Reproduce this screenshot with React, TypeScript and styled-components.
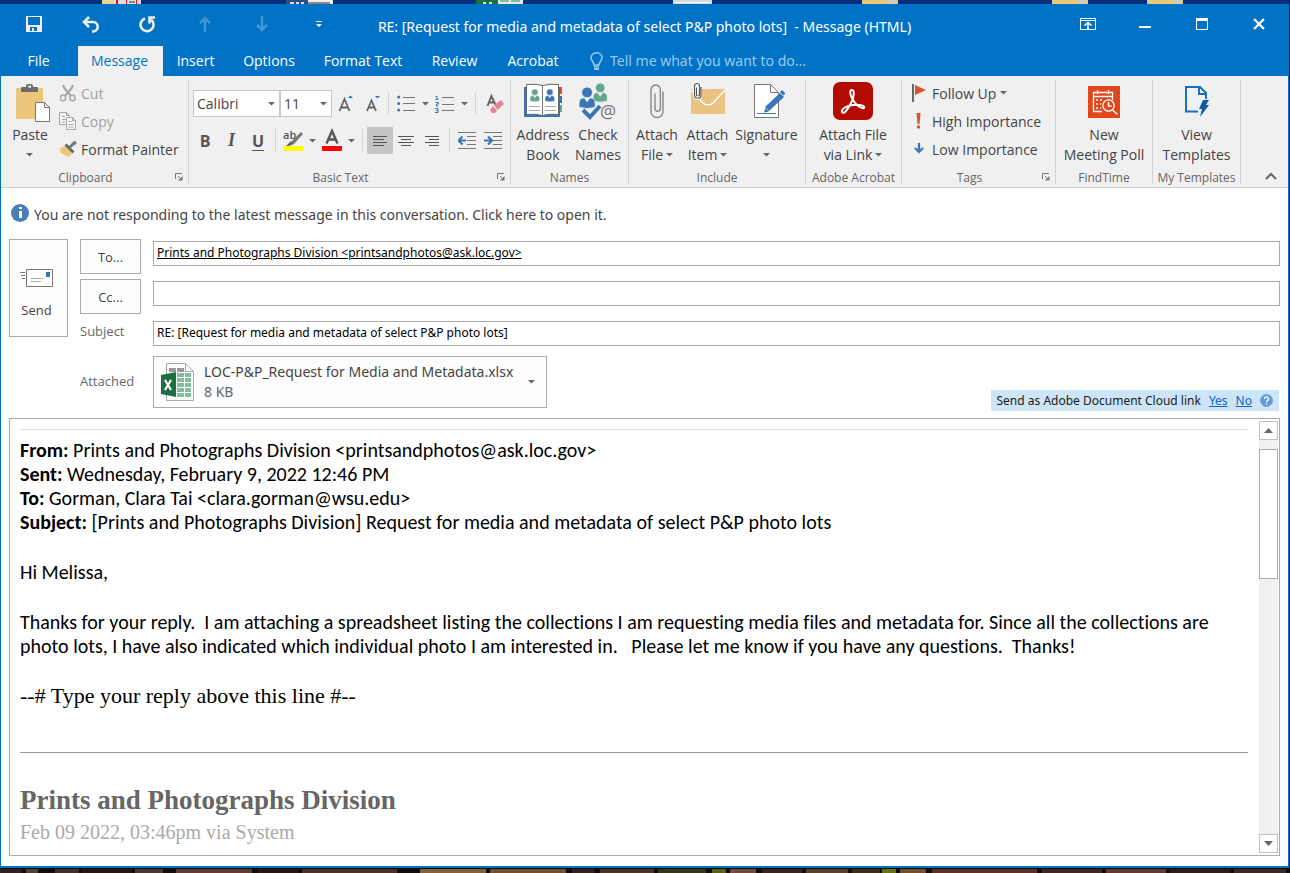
import React from "react";
import styled, { createGlobalStyle, css } from "styled-components";

const ui = `"Open Sans", "Noto Sans", sans-serif`;
const wide = `"Noto Sans", "Open Sans", sans-serif`;
const serif = `"Liberation Serif", serif`;

const Global = createGlobalStyle`
  * { box-sizing: border-box; }
  body { margin: 0; font-family: ${ui}; font-size: 14px; color: #444; }
  button, input, select { font: inherit; color: inherit; margin: 0; padding: 0; }
  svg { display: block; flex: none; }
`;

/* ---------- frame ---------- */
const Desktop = styled.div`
  min-height: 100vh;
  display: flex;
  flex-direction: column;
  background: #06265e;
  padding-right: 1px;
`;
const Strip = styled.div<{ $h: number }>`
  height: ${(p) => p.$h}px;
  margin-right: -1px;
  overflow: hidden;
  svg { width: 100%; height: 100%; }
`;
const Window = styled.main`
  flex: 1;
  display: flex;
  flex-direction: column;
  background: #fff;
  border: solid #0173c7;
  border-width: 0 1px 2px;
`;
const Header = styled.header`
  background: #0173c7;
  color: #fff;
`;
const TitleBar = styled.div`
  display: grid;
  grid-template-columns: 1fr auto 1fr;
  height: 42px;
`;
const Quick = styled.div`
  display: flex;
  height: 40px;
  padding-left: 4px;
`;
const Captions = styled(Quick)`
  justify-content: flex-end;
  padding: 0 1px 0 0;
`;
const Title = styled.h1`
  margin: 0;
  padding-top: 3px;
  font-family: ${wide};
  font-size: 14px;
  font-weight: 400;
  line-height: 40px;
  white-space: pre;
`;
const plain = css`
  display: flex;
  align-items: center;
  justify-content: center;
  background: none;
  border: 0;
`;
const BarButton = styled.button`
  ${plain}
  width: 57px;
  height: 40px;
`;
const Tabs = styled.nav`
  display: flex;
  height: 30px;
`;
const Tab = styled.button<{ $w: number; $on?: boolean }>`
  ${plain}
  width: ${(p) => p.$w}px;
  padding: 0 2px 2px 0;
  white-space: nowrap;
  background: ${(p) => (p.$on ? "#f0f0f0" : "none")};
  color: ${(p) => (p.$on ? "#0173c7" : "#fff")};
`;
const Tell = styled.label`
  display: flex;
  align-items: center;
  gap: 7px;
  padding-left: 15px;
  input {
    width: 240px;
    padding-bottom: 2px;
    border: 0;
    background: none;
    font-family: ${wide};
  }
  input::placeholder { color: #99c9ee; opacity: 1; }
`;

/* ---------- ribbon ---------- */
const Ribbon = styled.section`
  display: flex;
  height: 112px;
  padding: 4px 0 3px;
  background: #f0f0f0;
  border-bottom: 1px solid #d2d2d2;
`;
const GroupBox = styled.section<{ $w: number }>`
  flex: none;
  width: ${(p) => p.$w}px;
  display: flex;
  flex-direction: column;
  border-right: 1px solid #d2d2d2;
`;
const GroupBody = styled.div<{ $pad: number }>`
  flex: 1;
  display: flex;
  padding-left: ${(p) => p.$pad}px;
`;
const GroupFoot = styled.div`
  display: flex;
  height: 14px;
  line-height: 16px;
  font-size: 12px;
  color: #666;
  white-space: nowrap;
  span { flex: 1; text-align: center; }
`;
const Launch = styled.button`
  ${plain}
  width: 18px;
`;
const Big = styled.button<{ $w: number }>`
  flex: none;
  display: flex;
  flex-direction: column;
  align-items: center;
  gap: 3px;
  width: ${(p) => p.$w}px;
  padding-top: 2px;
  border: 0;
  background: none;
  line-height: 20px;
  white-space: nowrap;
`;
const Line = styled.span`
  display: flex;
  align-items: center;
  justify-content: center;
  gap: 3px;
  min-height: 20px;
`;
const Column = styled.div<{ $l?: number }>`
  display: flex;
  flex-direction: column;
  padding-left: ${(p) => p.$l ?? 0}px;
`;
const Small = styled.button<{ $off?: boolean }>`
  display: flex;
  align-items: center;
  gap: 4px;
  height: 28px;
  padding-bottom: 2px;
  border: 0;
  background: none;
  white-space: nowrap;
  color: ${(p) => (p.$off ? "#a0a0a0" : "#444")};
`;
const TextTools = styled.div`
  display: flex;
  flex-direction: column;
  gap: 10px;
  padding-top: 10px;
`;
const ToolRow = styled.div`
  display: flex;
  height: 27px;
`;
const Tool = styled.button<{ $w: number; $on?: boolean }>`
  ${plain}
  width: ${(p) => p.$w}px;
  background: ${(p) => (p.$on ? "#c5c5c5" : "none")};
`;
const Bar = styled.i<{ $l: number; $r: number }>`
  width: 1px;
  height: 22px;
  margin: 2px ${(p) => p.$r}px 2px ${(p) => p.$l}px;
  background: #d2d2d2;
`;
const Combo = styled.label<{ $w: number }>`
  display: grid;
  align-items: center;
  width: ${(p) => p.$w}px;
  select {
    grid-area: 1 / 1;
    height: 27px;
    padding-left: 3px;
    appearance: none;
    background: #fff;
    border: 1px solid #c6c6c6;
    border-radius: 0;
  }
  svg { grid-area: 1 / 1; justify-self: end; margin-right: 5px; pointer-events: none; }
`;
const Collapse = styled.button`
  ${plain}
  width: 30px;
  height: 16px;
  margin-left: auto;
  margin-right: 2px;
  align-self: flex-end;
`;

/* ---------- message header ---------- */
const Info = styled.button`
  display: flex;
  align-items: center;
  gap: 5px;
  height: 51px;
  padding: 2px 0 0 10px;
  border: 0;
  background: none;
  font-family: ${wide};
  text-align: left;
  svg { margin-bottom: 4px; }
`;
const Form = styled.form`
  display: grid;
  grid-template-columns: 59px 61px minmax(0, 1fr);
  grid-template-rows: 35px 35px 28px 61px;
  gap: 5px 12px;
  padding: 0 8px;
  font-size: 13px;
`;
const Boxed = styled.button`
  ${plain}
  border: 1px solid #ababab;
  background: #fdfdfd;
`;
const Send = styled(Boxed)`
  grid-row: 1 / 4;
  height: 98px;
  flex-direction: column;
  gap: 14px;
  padding: 12px 4px 0 0;
`;
const Field = styled.input<{ $line?: boolean }>`
  width: 100%;
  height: 25px;
  margin-top: 2px;
  padding: 0 3px 2px;
  border: 1px solid #ababab;
  background: #fff;
  color: #000;
  font-family: ${wide};
  font-size: 12px;
  text-decoration: ${(p) => (p.$line ? "underline" : "none")};
`;
const Label = styled.label`
  line-height: 24px;
  color: #666;
`;
const FieldLabel = styled.span`
  padding-top: 17px;
  line-height: 24px;
  color: #666;
`;
const AttachRow = styled.div`
  display: flex;
  justify-content: space-between;
  align-items: flex-end;
  padding: 0 1px 2px 0;
`;
const Attachment = styled(Boxed)`
  width: 394px;
  height: 52px;
  margin-bottom: 3px;
  padding: 0 11px 0 7px;
  gap: 9px;
  justify-content: flex-start;
  text-align: left;
  font-family: ${wide};
  font-size: 14px;
  line-height: 20px;
  white-space: nowrap;
  span { flex: 1; }
  small { display: block; font-size: 14px; color: #666; }
`;
const Cloud = styled.div`
  display: flex;
  align-items: center;
  gap: 8px;
  height: 21px;
  padding: 0 6px;
  background: #cde6f7;
  color: #1a1a1a;
  font-family: ${wide};
  font-size: 12px;
  white-space: nowrap;
  a { color: #0a62c4; }
`;

/* ---------- message body ---------- */
const Editor = styled.section`
  flex: 1;
  display: flex;
  margin: 5px 8px 10px;
  border: 1px solid #ababab;
`;
const Mail = styled.article`
  flex: 1;
  padding: 10px 10px 0 10px;
  color: #000;
  font-family: Carlito, Lato, sans-serif;
  font-size: 20px;
  line-height: 24px;
  font-variant-ligatures: none;
  p { margin: 0 0 26px; }
`;
const Rule = styled.hr<{ $dark?: boolean }>`
  height: 1px;
  margin: 0 0 8px;
  border: 0;
  background: ${(p) => (p.$dark ? "#999" : "#e1e1e1")};
`;
const Reply = styled.p`
  font-family: ${serif};
  font-size: 22px;
  padding-bottom: 18px;
`;
const Sender = styled.h2`
  margin: 32px 0 0;
  font-family: ${serif};
  font-size: 27px;
  line-height: 30px;
  color: #666;
`;
const When = styled.div`
  padding-top: 5px;
  font-family: ${serif};
  font-size: 20px;
  color: #aaa;
`;
const Scroll = styled.div`
  display: flex;
  flex-direction: column;
  width: 19px;
  margin: 2px 1px;
  background: #f0f0f0;
`;
const Arrow = styled.button`
  ${plain}
  height: 19px;
  border: 1px solid #c0c0c0;
  background: #fff;
`;
const Thumb = styled.div`
  height: 130px;
  margin: 9px 0 auto;
  border: 1px solid #ababab;
  background: #fff;
`;

/* ---------- drawings ---------- */
const Down = () => (
  <svg width="7" height="4" viewBox="0 0 7 4"><path d="M0 0h7L3.500 3.500z" fill="#666" /></svg>
);
const Folder = ({ x }: { x: number }) => (
  <g>
    <path d={`M${x} 0h36v4h-36z`} fill="#e3cb80" />
    <path d={`M${x + 26} 0h8v3h-8z`} fill="#c8cdd3" />
  </g>
);
const DesktopTop = () => (
  <svg viewBox="0 0 1290 4" preserveAspectRatio="none">
    <path d="M0 0h1290v4H0z" fill="#042f7f" />
    <path d="M102 0h12v4h-12z" fill="#e8d591" /><path d="M114 0h27v4h-27z" fill="#dedede" />
    <path d="M116 0h2v4h-2zM126 0h1v4h-1zM136 0h1v4h-1z" fill="#d12" />
    <path d="M129 1h6v2h-6z" fill="#888" />
    <path d="M286 0h22v4h-22z" fill="#2d4c83" /><path d="M290 2h4v2h-4zM296 2h3v2h-3zM301 2h3v2h-3z" fill="#ddd" />
    <path d="M308 0h25v4h-25z" fill="#eee" /><path d="M308 2h22v2h-22z" fill="#888" />
    <path d="M476 0h22v4h-22z" fill="#1d7044" /><path d="M483 2h3v2h-3zM489 2h3v2h-3z" fill="#ddd" />
    <path d="M498 0h25v4h-25z" fill="#e8e8e8" /><path d="M500 0h9v2h-9zM511 0h9v2h-9z" fill="#86bf9f" />
    <path d="M673 0h39v4h-39z" fill="#d5d8dd" /><path d="M675 2h34v1h-34z" fill="#fff" />
    <Folder x={862} /><Folder x={1052} /><Folder x={1147} />
  </svg>
);
const planks: [number, number, string][] = [
  [0, 22, "#2c211e"], [26, 12, "#50403a"], [55, 24, "#3d302c"], [82, 50, "#241815"], [135, 28, "#4a3835"],
  [176, 76, "#5d3b33"], [258, 40, "#241713"], [302, 95, "#4a3026"], [420, 66, "#80623a"], [490, 76, "#6e5032"],
  [572, 22, "#33221b"], [600, 54, "#4a3426"], [658, 48, "#2f3818"], [712, 14, "#596214"], [730, 26, "#704a3c"],
  [762, 40, "#35251d"], [806, 42, "#58402e"], [852, 28, "#3a2d1b"], [882, 14, "#69730e"], [900, 26, "#714f2b"],
  [932, 105, "#5b322a"], [1042, 60, "#402620"], [1106, 60, "#5d3931"], [1170, 60, "#2b1b19"], [1234, 52, "#3d2826"],
];
const DesktopBottom = () => (
  <svg viewBox="0 0 1290 5" preserveAspectRatio="none">
    <path d="M0 0h1290v5H0z" fill="#120c0c" />
    {planks.map(([x, w, c]) => <rect key={x} x={x} y="1" width={w} height="4" fill={c} />)}
  </svg>
);
const Save = () => (
  <svg width="16" height="16" viewBox="0 0 16 16"><path fill="#f0f0f0" fillRule="evenodd" d="M0 0h16v16H0zM2 1v8h12V1zM4 11v4h7v-4z" /><path fill="#f0f0f0" d="M6 12h2v3H6z" /></svg>
);
const Undo = () => (
  <svg width="18" height="17" viewBox="0 0 18 17" fill="none" stroke="#f0f0f0"><path d="M2 6h9a4.700 4.700 0 0 1 0 9.500h-1" strokeWidth="2.600" /><path d="M7 1 2 6l5 5" strokeWidth="2.600" /></svg>
);
const Redo = () => (
  <svg width="17" height="17" viewBox="0 0 17 17" fill="none" stroke="#f0f0f0" strokeWidth="2.600"><path d="M6 2.500a6.500 6.500 0 1 0 6 1" /><path d="M16 1.500h-5.500v6" /></svg>
);
const Vertical = ({ flip }: { flip?: boolean }) => (
  <svg width="12" height="16" viewBox="0 0 12 16" fill="none" stroke="#3f95d6" strokeWidth="2.600"><path d={flip ? "M6 0v14M1 9l5 5 5-5" : "M6 16V2M1 7l5-5 5 5"} /></svg>
);
const Customize = () => (
  <svg width="6" height="6" viewBox="0 0 6 6" fill="#f0f0f0"><path d="M0 0h6v1H0zM0 3h6L3 6z" /></svg>
);
const RibbonMode = () => (
  <svg width="16" height="12" viewBox="0 0 16 12" fill="none" stroke="#fff"><path d="M.5.5h15v11H.5zM1 2.500h14" /><path d="M8 11V5M4.500 7.500 8 4.500l3.500 3" strokeWidth="1.600" /></svg>
);
const Minimize = () => <svg width="12" height="12" viewBox="0 0 12 12"><path d="M0 8h12v2H0z" fill="#fff" /></svg>;
const Maximize = () => <svg width="12" height="12" viewBox="0 0 12 12"><path fillRule="evenodd" d="M0 0h12v12H0zM1 3v8h10V3z" fill="#fff" /></svg>;
const Close = () => <svg width="12" height="12" viewBox="0 0 12 12"><path d="m1 1 10 10M11 1 1 11" stroke="#fff" strokeWidth="2.200" /></svg>;
const Bulb = () => (
  <svg width="13" height="19" viewBox="0 0 13 19" fill="none" stroke="#99c9ee" strokeWidth="1.500"><path d="M4 13c0-3-3-4-3-7.200a5.500 5 0 0 1 11 0C12 9 9 10 9 13zM4 14.700h5" /><path d="M4 17h5" strokeWidth="2" /></svg>
);
const Paste = () => (
  <svg width="42" height="40" viewBox="-6 0 42 40">
    <path d="M1 6h27v31H1z" fill="#edc67e" />
    <path fillRule="evenodd" d="M6 10V6q0-1 1-1h4V4q0-2 2-2h3q2 0 2 2v1h4q1 0 1 1v4zM13.500 3.500v2.200h2.500V3.500z" fill="#6c6c6c" />
    <path d="M20.500 20.500h9l5 5v14h-14z" fill="#fff" stroke="#777" /><path d="M29.500 20.500v5h5" fill="none" stroke="#777" />
  </svg>
);
const Cut = () => (
  <svg width="18" height="18" viewBox="0 0 18 18" fill="none" stroke="#a7a7a7"><path d="M4 1c1 4 5 7 8 11M14 1C13 5 9 8 6 12" strokeWidth="2.200" /><circle cx="4" cy="14" r="2.700" strokeWidth="1.400" /><circle cx="13.500" cy="14" r="2.700" strokeWidth="1.400" /></svg>
);
const Copy = () => (
  <svg width="18" height="18" viewBox="0 0 18 18" fill="#f5f5f5" stroke="#a7a7a7"><path d="M.5.5h7l3 3v9H.5zM7.500.5v3h3M3 4.500h3M3 7.500h5M3 10h3" /><path d="M7.500 5.500h6l3 3v9h-9zM13.500 5.500v3h3M9.500 9.500h3M9.500 12.500h5M9.500 15h5" /></svg>
);
const Painter = () => (
  <svg width="18" height="18" viewBox="0 0 18 18"><path d="m1 8 5-2 7 7-3 4q-5-1-9-5z" fill="#edc67e" /><path d="m5.500 5.500 2-2 8 8-2 2z" fill="#666" /><path d="m10.500 7.500 4-4" stroke="#777" strokeWidth="3" /><circle cx="15.500" cy="3" r="2" fill="#777" /></svg>
);
const Launcher = () => (
  <svg width="8" height="8" viewBox="0 0 8 8"><path d="M.5 6V.5H7M3 3l3 3" fill="none" stroke="#777" /><path d="M7.500 3v4.500H3z" fill="#777" /></svg>
);
const SizeA = ({ down }: { down?: boolean }) => (
  <svg width="16" height="18" viewBox="0 0 16 18"><path d={down ? "M2 16 6.500 5.500 11 16M3.500 12.500h6" : "M1.500 16 6.500 4 11.500 16M3 12.500h7"} fill="none" stroke="#666" strokeWidth="1.800" /><path d={down ? "M10 1h5l-2.500 2.500z" : "M10 3h5l-2.500-2.500z"} fill="#3572b0" /></svg>
);
const Bullets = () => (
  <svg width="18" height="17" viewBox="0 0 18 17"><path d="M6 2.500h12M6 8.500h12M6 15.500h12" stroke="#777" /><g fill="#3a76b5"><circle cx="1.700" cy="2" r="1.500" /><circle cx="1.700" cy="8.500" r="1.500" /><circle cx="1.700" cy="15" r="1.500" /></g></svg>
);
const Numbers = () => (
  <svg width="19" height="18" viewBox="0 0 19 18"><path d="M7 2.500h12M7 9.500h12M7 15.500h12" stroke="#777" /><path d="M.5 1.500h1.500v3M.5 4.500h3M.5 7.500h3v1.500h-2v2h2M0 13.500h3v4H0M1 15.500h2" fill="none" stroke="#3a76b5" /></svg>
);
const Eraser = () => (
  <svg width="18" height="20" viewBox="0 0 18 20"><path d="M1.500 12 5.500 2l4 9M3 8.500h5" fill="none" stroke="#666" strokeWidth="2" /><path d="m8 11 7-5 3 4-6.500 6z" fill="#e8819a" /><path d="m7 12 4 4.500-2 2.500H6l-2-3z" fill="#e8819a" /></svg>
);
const Mark = styled.span<{ $k: "b" | "i" | "u" }>`
  font-size: 16px;
  font-weight: 700;
  color: #555;
  ${(p) => p.$k === "i" && `font-family: ${serif}; font-style: italic; font-size: 18px;`}
  ${(p) => p.$k === "u" && "text-decoration: underline; text-decoration-thickness: 1px; text-underline-offset: 3px;"}
`;
const Highlight = () => (
  <svg width="20" height="28" viewBox="0 -3 20 28"><path d="M0 16h20v5H0z" fill="#ff0" /><text x="0" y="9" fontSize="11" fontWeight="600" fill="#555">ab</text><path d="m18 2 2 2-9 10-3-2z" fill="#777" /><path d="m8 11 3 3-5 2H3z" fill="#666" /></svg>
);
const FontColor = () => (
  <svg width="20" height="28" viewBox="0 -3 20 28"><path d="M0 16h20v5H0z" fill="#f00" /><path d="M4.500 13.500 10 1l5.500 12.500M6.500 9.500h7" fill="none" stroke="#555" strokeWidth="2.400" /></svg>
);
const Align = ({ k }: { k: "l" | "c" | "r" }) => (
  <svg width="16" height="12" viewBox="-1 0 16 12"><path d={{ l: "M0 1.500h14M0 4.500h11M0 7.500h14M0 10.500h11", c: "M-1 1.500h16M2 4.500h10M-1 7.500h16M2 10.500h10", r: "M0 1.500h14M4 4.500h10M0 7.500h14M4 10.500h10" }[k]} stroke="#555" /></svg>
);
const Dent = ({ right }: { right?: boolean }) => (
  <svg width="18" height="17" viewBox="0 0 18 17"><path d="M0 .5h18M9 4.500h9M9 8.500h9M9 12.500h9M0 16.500h18" stroke="#777" /><path d={right ? "M0 8.500h7M4 4.500l4 4-4 4" : "M8 8.500H1M4.500 4.500l-4 4 4 4"} fill="none" stroke="#3a76b5" strokeWidth="2.200" /></svg>
);
const Person = ({ x, y, c, s = 1 }: { x: number; y: number; c: string; s?: number }) => (
  <g transform={`translate(${x} ${y}) scale(${s})`} fill={c} stroke="#f3f3f3" strokeWidth=".6"><circle cx="6" cy="4" r="4" /><path d="M0 15v-3q0-4 4-4l2 3 2-3q4 0 4 4v3q-6 2-12 0z" /></g>
);
const AddressBook = () => (
  <svg width="40" height="40" viewBox="0 0 40 40">
    <path d="M34 5h5v7h-5z" fill="#d8532f" /><path d="M34 14h5v7h-5z" fill="#3a76b5" /><path d="M34 23h5v7h-5z" fill="#64a68b" />
    <path d="M1 5h36v30H1z" fill="#3a76b5" />
    <path d="M3.500 2.500q9-1 16 1 7-2 16-1v30q-9-1-16 1-7-2-16-1z" fill="#fff" stroke="#666" /><path d="M19.500 3v30" stroke="#777" />
    <Person x={7} y={7} c="#64a68b" s={0.8} /><Person x={22} y={7} c="#3a76b5" s={0.8} />
    <path d="M6 24.500h11M6 28.500h11M22 24.500h11M22 28.500h11" stroke="#aaa" />
  </svg>
);
const CheckNames = () => (
  <svg width="40" height="40" viewBox="0 0 40 40">
    <Person x={15} y={1} c="#64a68b" s={1.2} /><Person x={1} y={5} c="#3a76b5" s={1.35} />
    <path d="m5 28 7 7 10-11" fill="none" stroke="#3a76b5" strokeWidth="4" />
    <text x="22" y="36" fontSize="18" fill="#777">@</text>
  </svg>
);
const Clip = () => (
  <svg width="18" height="40" viewBox="0 0 18 40"><path d="M6.500 12v15a2.700 2.700 0 0 0 5.400 0V9A4.700 5 0 0 0 2.500 8v22a6 6 0 0 0 12 0V10" transform="translate(.5 -.5)" fill="none" stroke="#888" strokeWidth="1.400" /></svg>
);
const AttachItem = () => (
  <svg width="36" height="40" viewBox="0 0 36 40"><path d="M1 7h34v25H1z" fill="#eac382" /><path d="M1 8l11 12q6 6 12 0L35 8" fill="none" stroke="#fff" strokeWidth="1.500" /><rect x="3" y="0" width="9" height="18" rx="4.500" fill="#fff" /><path d="M6.500 5.500v7a1.500 1.500 0 0 0 3 0V4a2.500 2.500 0 0 0-5 0v9a3.200 3.200 0 0 0 6.500 0V5" fill="none" stroke="#555" strokeWidth="1.200" /></svg>
);
const Signature = () => (
  <svg width="36" height="40" viewBox="0 0 36 40"><path d="M5.500 2.500h16l8 8v25h-24z" fill="#fff" stroke="#777" /><path d="M21.500 2.500v8h8" fill="none" stroke="#777" /><path d="M8 31.500h19" stroke="#3a76b5" /><path d="m31 11 4 4-15 14-4-4z" fill="#3a76b5" /><path d="m16.500 26 3.500 3.500-5 1z" fill="#3a76b5" /><path d="m32 9 3.500 3.500" stroke="#3a76b5" strokeWidth="3" /></svg>
);
const Acrobat = () => (
  <svg width="40" height="40" viewBox="0 0 40 40"><rect width="40" height="38" rx="7" fill="#b30b00" /><path d="M19 8c-3 0-2 5 1 10 3 5 8 9 11 8 2-2-4-4-11-3-7 1-12 4-11 7 2 3 6-3 9-9 3-5 4-13 1-13z" fill="none" stroke="#fff" strokeWidth="2" /></svg>
);
const Poll = () => (
  <svg width="32" height="40" viewBox="0 0 32 40"><path d="M0 4h32v32H0z" fill="#e2461b" /><path d="M14 29.500H5.500v-19h19V18M5.500 14.500h19M9.500 8v4M20.500 8v4" fill="none" stroke="#fff" strokeWidth="1.300" /><path d="M8 18h2M8 22h2M8 26h2M12 18h2M12 22h1M12 26h1" stroke="#fff" strokeWidth="1.500" /><circle cx="20.500" cy="23.500" r="5.700" fill="none" stroke="#fff" strokeWidth="1.300" /><path d="M20.500 20v4h3M24.500 28l5 4.500" fill="none" stroke="#fff" strokeWidth="1.500" /></svg>
);
const Template = () => (
  <svg width="26" height="40" viewBox="0 0 26 40"><path d="M14 29.500H2V5h14l6 6v6" fill="none" stroke="#1b6fc0" strokeWidth="2" /><path d="M15 5v7h7" fill="none" stroke="#1b6fc0" strokeWidth="2" /><path d="m19 18 6 0-3 5h3l-9 12 2-8h-3z" fill="#0b5ea5" /></svg>
);
const Flag = () => (
  <svg width="16" height="18" viewBox="0 0 16 18"><path d="M0 0h2v18H0z" fill="#666" /><path d="m3 1 11 5-11 5z" fill="#d8532f" /></svg>
);
const High = () => (
  <svg width="16" height="18" viewBox="0 0 16 18"><path d="M4.500 1h4L7.500 12h-2z" fill="#d8532f" /><circle cx="6.500" cy="15" r="1.700" fill="#d8532f" /></svg>
);
const Low = () => (
  <svg width="16" height="18" viewBox="0 0 16 18"><path d="M7 3v9M3 8l4 4 4-4" fill="none" stroke="#3a76b5" strokeWidth="2.200" /></svg>
);
const InfoMark = () => (
  <svg width="18" height="18" viewBox="0 0 18 18"><circle cx="9" cy="9" r="9" fill="#4a7db5" /><path d="M8 3h3v2H8zM8 7h3v7H8z" fill="#fff" /></svg>
);
const Envelope = () => (
  <svg width="33" height="18" viewBox="0 0 33 18"><path d="M6.500.5h26v17h-26z" fill="#fff" stroke="#777" /><path d="M26 3h4v5h-4z" fill="#3a76b5" /><path d="M11 9.500h12M11 12.500h10" stroke="#aaa" /><path d="M0 3.500h5M1 6.500h4M2 9.500h3" stroke="#777" /></svg>
);
const Excel = () => (
  <svg width="34" height="40" viewBox="0 0 34 40">
    <path d="M5.500 1.500h19l8 8v29h-27z" fill="#fff" stroke="#aaa" /><path d="M24.500 1.500v8h8" fill="none" stroke="#aaa" />
    <path d="M8 6h7v4H8zM16 6h7v4h-7z" fill="#999" />
    <path d="M16 11h7v4h-7zM24 11h6v4h-6zM16 16h7v4h-7zM24 16h6v4h-6zM16 21h7v4h-7zM24 21h6v4h-6zM16 26h7v4h-7zM24 26h6v4h-6zM16 31h7v4h-7zM24 31h6v4h-6z" fill="#82bd9c" />
    <path d="m0 13 15-3v25L0 32z" fill="#1d7044" /><path d="m4 18 6 10M10 18 4 28" stroke="#fff" strokeWidth="2.200" />
  </svg>
);
const Help = () => (
  <svg width="13" height="13" viewBox="0 0 13 13"><circle cx="6.500" cy="6.500" r="6" fill="#5c9bdc" stroke="#7c9fc8" /><path d="M4.500 5a2 2 0 1 1 3 1.600q-1 .6-1 1.600M6.500 9.300v1.200" fill="none" stroke="#fff" strokeWidth="1.400" /></svg>
);
const Tri = ({ up }: { up?: boolean }) => (
  <svg width="9" height="5" viewBox="0 0 9 5"><path d={up ? "M0 5h9L4.500 0z" : "M0 0h9L4.500 5z"} fill="#666" /></svg>
);
const Chevron = () => (
  <svg width="12" height="8" viewBox="0 0 12 8"><path d="m1 7 5-5 5 5" fill="none" stroke="#666" strokeWidth="2" /></svg>
);

/* ---------- composed parts ---------- */
type GroupProps = { name: string; w: number; pad?: number; launch?: boolean; children: React.ReactNode };
const Group = ({ name, w, pad = 0, launch, children }: GroupProps) => (
  <GroupBox $w={w} aria-label={name}>
    <GroupBody $pad={pad}>{children}</GroupBody>
    <GroupFoot>
      <span>{name}</span>
      {launch && <Launch type="button" aria-label={`${name} options`}><Launcher /></Launch>}
    </GroupFoot>
  </GroupBox>
);
type BigProps = { w: number; icon: React.ReactNode; a: string; b?: string; menu?: boolean };
const BigButton = ({ w, icon, a, b, menu }: BigProps) => (
  <Big type="button" $w={w}>
    {icon}
    <span>
      <Line>{a}</Line>
      <Line>{b}{menu && <Down />}</Line>
    </span>
  </Big>
);

const tabs: [string, number][] = [
  ["File", 77], ["Message", 85], ["Insert", 67], ["Options", 80], ["Format Text", 108], ["Review", 75], ["Acrobat", 82],
];

export default function App() {
  return (
    <Desktop>
      <Global />
      <Strip $h={4}><DesktopTop /></Strip>
      <Window>
        <Header>
          <TitleBar>
            <Quick>
              <BarButton aria-label="Save"><Save /></BarButton>
              <BarButton aria-label="Undo"><Undo /></BarButton>
              <BarButton aria-label="Redo"><Redo /></BarButton>
              <BarButton aria-label="Previous item"><Vertical /></BarButton>
              <BarButton aria-label="Next item"><Vertical flip /></BarButton>
              <BarButton aria-label="Customize toolbar"><Customize /></BarButton>
            </Quick>
            <Title>{"RE: [Request for media and metadata of select P&P photo lots]  - Message (HTML)"}</Title>
            <Captions>
              <BarButton aria-label="Ribbon display options"><RibbonMode /></BarButton>
              <BarButton aria-label="Minimize"><Minimize /></BarButton>
              <BarButton aria-label="Maximize"><Maximize /></BarButton>
              <BarButton aria-label="Close"><Close /></BarButton>
            </Captions>
          </TitleBar>
          <Tabs>
            {tabs.map(([t, w]) => <Tab key={t} $w={w} $on={t === "Message"}>{t}</Tab>)}
            <Tell><Bulb /><input aria-label="Tell me" placeholder="Tell me what you want to do..." /></Tell>
          </Tabs>
        </Header>

        <Ribbon>
          <Group name="Clipboard" w={188} pad={8} launch>
            <BigButton w={42} icon={<Paste />} a="Paste" menu />
            <Column $l={8}>
              <Small $off><Cut />Cut</Small>
              <Small $off><Copy />Copy</Small>
              <Small><Painter />Format Painter</Small>
            </Column>
          </Group>
          <Group name="Basic Text" w={322} pad={4} launch>
            <TextTools>
              <ToolRow>
                <Combo $w={87}><select aria-label="Font"><option>Calibri</option></select><Down /></Combo>
                <Combo $w={52}><select aria-label="Font size"><option>11</option></select><Down /></Combo>
                <Tool $w={28} aria-label="Grow font"><SizeA /></Tool>
                <Tool $w={26} aria-label="Shrink font"><SizeA down /></Tool>
                <Bar $l={2} $r={2} />
                <Tool $w={30} aria-label="Bullets"><Bullets /></Tool>
                <Tool $w={8} aria-label="Bullet styles"><Down /></Tool>
                <Tool $w={31} aria-label="Numbering"><Numbers /></Tool>
                <Tool $w={8} aria-label="Number styles"><Down /></Tool>
                <Bar $l={7} $r={7} />
                <Tool $w={23} aria-label="Clear formatting"><Eraser /></Tool>
              </ToolRow>
              <ToolRow>
                <Tool $w={24}><Mark $k="b">B</Mark></Tool>
                <Tool $w={29}><Mark $k="i">I</Mark></Tool>
                <Tool $w={24}><Mark $k="u">U</Mark></Tool>
                <Bar $l={5} $r={5} />
                <Tool $w={24} aria-label="Highlight"><Highlight /></Tool>
                <Tool $w={14} aria-label="Highlight colours"><Down /></Tool>
                <Tool $w={26} aria-label="Font colour"><FontColor /></Tool>
                <Tool $w={12} aria-label="Font colours"><Down /></Tool>
                <Bar $l={5} $r={4} />
                <Tool $w={26} $on aria-label="Align left"><Align k="l" /></Tool>
                <Tool $w={26} aria-label="Centre"><Align k="c" /></Tool>
                <Tool $w={26} aria-label="Align right"><Align k="r" /></Tool>
                <Bar $l={4} $r={4} />
                <Tool $w={26} aria-label="Decrease indent"><Dent /></Tool>
                <Tool $w={26} aria-label="Increase indent"><Dent right /></Tool>
              </ToolRow>
            </TextTools>
          </Group>
          <Group name="Names" w={118} pad={2}>
            <BigButton w={60} icon={<AddressBook />} a="Address" b="Book" />
            <BigButton w={50} icon={<CheckNames />} a="Check" b="Names" />
          </Group>
          <Group name="Include" w={177} pad={3}>
            <BigButton w={50} icon={<Clip />} a="Attach" b="File" menu />
            <BigButton w={51} icon={<AttachItem />} a="Attach" b="Item" menu />
            <BigButton w={67} icon={<Signature />} a="Signature" menu />
          </Group>
          <Group name="Adobe Acrobat" w={96}>
            <BigButton w={94} icon={<Acrobat />} a="Attach File" b="via Link" menu />
          </Group>
          <Group name="Tags" w={154} pad={10} launch>
            <Column>
              <Small><Flag />Follow Up<Down /></Small>
              <Small><High />High Importance</Small>
              <Small><Low />Low Importance</Small>
            </Column>
          </Group>
          <Group name="FindTime" w={97}>
            <BigButton w={96} icon={<Poll />} a="New" b="Meeting Poll" />
          </Group>
          <Group name="My Templates" w={88}>
            <BigButton w={87} icon={<Template />} a="View" b="Templates" />
          </Group>
          <Collapse aria-label="Collapse the ribbon"><Chevron /></Collapse>
        </Ribbon>

        <Info type="button"><InfoMark />You are not responding to the latest message in this conversation. Click here to open it.</Info>

        <Form onSubmit={(e) => e.preventDefault()}>
          <Send type="submit"><Envelope />Send</Send>
          <Boxed type="button">To...</Boxed>
          <Field $line aria-label="To" defaultValue="Prints and Photographs Division <printsandphotos@ask.loc.gov>" />
          <Boxed type="button">Cc...</Boxed>
          <Field aria-label="Cc" />
          <Label htmlFor="subject">Subject</Label>
          <Field id="subject" defaultValue="RE: [Request for media and metadata of select P&P photo lots]" />
          <i />
          <FieldLabel>Attached</FieldLabel>
          <AttachRow>
            <Attachment type="button">
              <Excel />
              <span>LOC-P&amp;P_Request for Media and Metadata.xlsx<small>8 KB</small></span>
              <Down />
            </Attachment>
            <Cloud>Send as Adobe Document Cloud link <a href="#yes">Yes</a> <a href="#no">No</a><Help /></Cloud>
          </AttachRow>
        </Form>

        <Editor>
          <Mail>
            <Rule />
            <p>
              <b>From:</b> Prints and Photographs Division &lt;printsandphotos@ask.loc.gov&gt;<br />
              <b>Sent:</b> Wednesday, February 9, 2022 12:46 PM<br />
              <b>To:</b> Gorman, Clara Tai &lt;clara.gorman@wsu.edu&gt;<br />
              <b>Subject:</b> [Prints and Photographs Division] Request for media and metadata of select P&amp;P photo lots
            </p>
            <p>Hi Melissa,</p>
            <p>
              Thanks for your reply.&nbsp; I am attaching a spreadsheet listing the collections I am requesting media files and metadata for. Since all the collections are
              photo lots, I have also indicated which individual photo I am interested in.&nbsp;&nbsp; Please let me know if you have any questions.&nbsp; Thanks!
            </p>
            <Reply>--# Type your reply above this line #--</Reply>
            <Rule $dark />
            <Sender>Prints and Photographs Division</Sender>
            <When>Feb 09 2022, 03:46pm via System</When>
          </Mail>
          <Scroll>
            <Arrow aria-label="Scroll up"><Tri up /></Arrow>
            <Thumb />
            <Arrow aria-label="Scroll down"><Tri /></Arrow>
          </Scroll>
        </Editor>
      </Window>
      <Strip $h={5}><DesktopBottom /></Strip>
    </Desktop>
  );
}
